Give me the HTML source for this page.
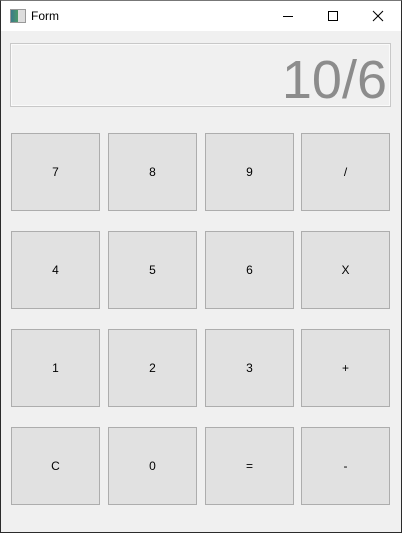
<!DOCTYPE html>
<html><head><style>
html,body{margin:0;padding:0}
body{width:402px;height:533px;position:relative;overflow:hidden;background:#f0f0f0;font-family:"Liberation Sans",sans-serif}
.win{position:absolute;left:0;top:0;width:400px;height:531px;border:1px solid #2b2b2b;border-top:1px solid #777;background:#f0f0f0}
.title{position:absolute;left:0;top:0;width:400px;height:30px;background:#fff}
.title .t{position:absolute;left:30px;top:8px;font-size:12px;color:#000}
.ico{position:absolute;left:9px;top:8px;width:14px;height:12px;border:1px solid #999;background:linear-gradient(90deg,#3a7a8a 0,#4c9a6a 50%,#ddd 50%)}
.disp{position:absolute;left:10px;top:43px;width:379px;height:62px;border:1px solid #c8c8c8;box-shadow:inset 0 0 0 1px #fafafa;background:#f0f0f0}
.disp span{position:absolute;right:3px;top:5px;font-size:54px;color:#8c8c8c;font-weight:normal;letter-spacing:0px}
.b{position:absolute;width:87px;height:76px;border:1px solid #adadad;background:#e1e1e1;font-size:12px;color:#000;display:flex;align-items:center;justify-content:center}
</style></head><body>
<div class="win">
<div class="title"><div class="ico"></div><div class="t">Form</div>
<svg style="position:absolute;left:280px;top:8px" width="110" height="16">
<line x1="2" y1="7.5" x2="12" y2="7.5" stroke="#000"/>
<rect x="47.5" y="2.5" width="9" height="9" fill="none" stroke="#000"/>
<line x1="92" y1="2" x2="102" y2="12" stroke="#000"/><line x1="102" y1="2" x2="92" y2="12" stroke="#000"/>
</svg></div>
</div>
<div class="disp"><span>10/6</span></div>
<div class="b" style="left:11px;top:133px">7</div>
<div class="b" style="left:108px;top:133px">8</div>
<div class="b" style="left:205px;top:133px">9</div>
<div class="b" style="left:301px;top:133px">/</div>
<div class="b" style="left:11px;top:231px">4</div>
<div class="b" style="left:108px;top:231px">5</div>
<div class="b" style="left:205px;top:231px">6</div>
<div class="b" style="left:301px;top:231px">X</div>
<div class="b" style="left:11px;top:329px">1</div>
<div class="b" style="left:108px;top:329px">2</div>
<div class="b" style="left:205px;top:329px">3</div>
<div class="b" style="left:301px;top:329px">+</div>
<div class="b" style="left:11px;top:427px">C</div>
<div class="b" style="left:108px;top:427px">0</div>
<div class="b" style="left:205px;top:427px">=</div>
<div class="b" style="left:301px;top:427px">-</div>
</body></html>
